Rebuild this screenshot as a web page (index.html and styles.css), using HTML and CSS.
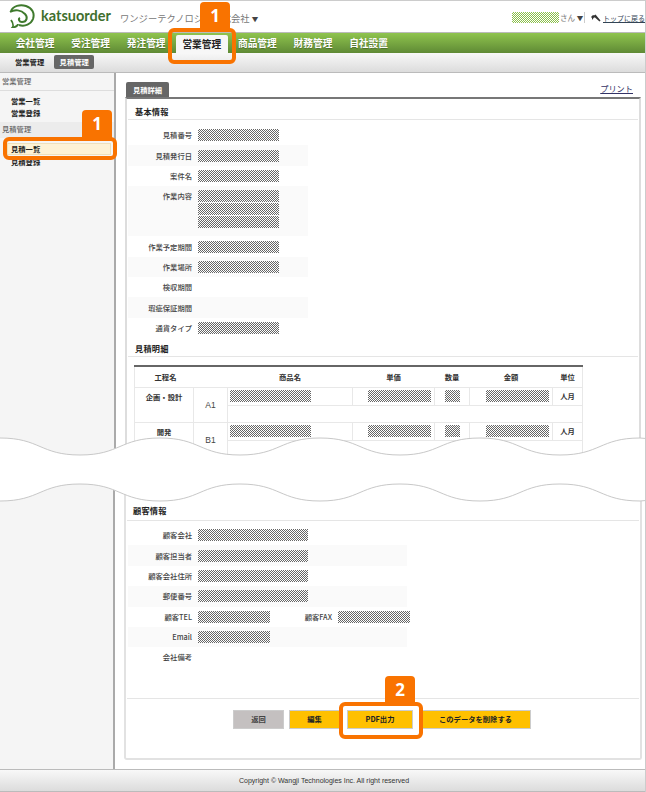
FILE: index.html
```html
<!DOCTYPE html>
<html lang="ja">
<head>
<meta charset="utf-8">
<title>katsuorder</title>
<link rel="stylesheet" href="styles.css">
</head>
<body>
<div class="page">
  <header class="header">
    <svg class="logo" viewBox="0 0 26 24" width="26" height="24" aria-hidden="true">
      <path d="M2 7C4 2 11 0 17 2C23 4 26 9 24 15C22 20 16 23 10 21" fill="none" stroke="#3f7a2d" stroke-width="2"/>
      <path d="M1 8C6 5 12 6 16 10C19 13 18 18 13 18C10 18 9 15 11 14" fill="none" stroke="#3f7a2d" stroke-width="2"/>
      <path d="M2 16C5 20 4 23 3 24C7 23 9 21 9 20" fill="none" stroke="#3f7a2d" stroke-width="1.8"/>
    </svg>
    <span class="brand">katsuorder</span>
    <span class="company">ワンジーテクノロジー株式会社 <span class="caret">▼</span></span>
    <div class="user">
      <span class="mask mask-green"></span>
      <span class="user-name">さん <span class="caret">▼</span></span>
      <span class="user-sep"></span>
      <svg class="home" viewBox="0 0 10 8" width="10" height="8" aria-hidden="true"><path d="M0 3L1 4L1 6L3 3.500L4 3.500L8.500 7.500L9.500 6.500L4.500 0.500L3 1.500L2 1L0 3Z" fill="#333"/></svg>
      <a class="top-link" href="#">トップに戻る</a>
    </div>
  </header>

  <nav class="nav">
    <a class="nav-item" href="#">会社管理</a>
    <a class="nav-item" href="#">受注管理</a>
    <a class="nav-item" href="#">発注管理</a>
    <a class="nav-item nav-active" href="#">営業管理</a>
    <a class="nav-item" href="#">商品管理</a>
    <a class="nav-item" href="#">財務管理</a>
    <a class="nav-item" href="#">自社設置</a>
  </nav>

  <div class="subnav">
    <a class="sub-item" href="#">営業管理</a>
    <a class="sub-item sub-active" href="#">見積管理</a>
  </div>

  <div class="part part-top">
    <aside class="side">
      <div class="side-head">営業管理</div>
      <ul class="side-list">
        <li class="side-link">営業一覧</li>
        <li class="side-link">営業登録</li>
      </ul>
      <div class="side-head side-head-alt">見積管理</div>
      <ul class="side-list side-list-tight">
        <li class="side-link side-current">見積一覧</li>
        <li class="side-link">見積登録</li>
      </ul>
    </aside>
    <main class="content">
      <div class="tabbar">
        <span class="tab">見積詳細</span>
        <a class="print" href="#">プリント</a>
      </div>
      <section class="panel">
        <h2 class="sec-title">基本情報</h2>
        <div class="rows">
          <div class="row"><span class="lbl">見積番号</span><span class="mask mask-m"></span></div>
          <div class="row row-alt"><span class="lbl">見積発行日</span><span class="mask mask-m"></span></div>
          <div class="row"><span class="lbl">案件名</span><span class="mask mask-m"></span></div>
          <div class="row row-alt row-multi"><span class="lbl">作業内容</span><span class="stack"><span class="mask mask-m"></span><span class="mask mask-m"></span><span class="mask mask-m"></span></span></div>
          <div class="row"><span class="lbl">作業予定期間</span><span class="mask mask-m"></span></div>
          <div class="row row-alt"><span class="lbl">作業場所</span><span class="mask mask-m"></span></div>
          <div class="row"><span class="lbl">検収期間</span></div>
          <div class="row row-alt"><span class="lbl">瑕疵保証期間</span></div>
          <div class="row"><span class="lbl">通貨タイプ</span><span class="mask mask-m"></span></div>
        </div>
        <h2 class="sec-title sec-title-next">見積明細</h2>
        <table class="items">
          <colgroup>
            <col class="c-proc"><col class="c-code"><col class="c-name"><col class="c-price"><col class="c-qty"><col class="c-amount"><col class="c-unit">
          </colgroup>
          <thead>
            <tr><th colspan="2" class="th-proc">工程名</th><th>商品名</th><th>単価</th><th>数量</th><th>金額</th><th>単位</th></tr>
          </thead>
          <tbody>
            <tr class="tr-a">
              <td rowspan="2" class="td-proc">企画・設計</td><td rowspan="2" class="td-code">A1</td>
              <td class="td-name"><span class="mask mask-name"></span></td>
              <td class="td-num"><span class="mask mask-price"></span></td>
              <td class="td-qty"><span class="mask mask-qty"></span></td>
              <td class="td-num"><span class="mask mask-price"></span></td>
              <td class="td-unit">人月</td>
            </tr>
            <tr class="tr-b"><td colspan="5"></td></tr>
            <tr class="tr-a">
              <td rowspan="2" class="td-proc">開発</td><td rowspan="2" class="td-code">B1</td>
              <td class="td-name"><span class="mask mask-name"></span></td>
              <td class="td-num"><span class="mask mask-price"></span></td>
              <td class="td-qty"><span class="mask mask-qty"></span></td>
              <td class="td-num"><span class="mask mask-price"></span></td>
              <td class="td-unit">人月</td>
            </tr>
            <tr class="tr-b"><td colspan="5"></td></tr>
          </tbody>
        </table>
      </section>
    </main>
  </div>

  <div class="part part-bottom">
    <aside class="side"></aside>
    <main class="content">
      <section class="panel panel-end">
        <h2 class="sec-title">顧客情報</h2>
        <div class="rows rows-wide">
          <div class="row"><span class="lbl">顧客会社</span><span class="mask mask-l"></span></div>
          <div class="row row-alt"><span class="lbl">顧客担当者</span><span class="mask mask-l"></span></div>
          <div class="row"><span class="lbl">顧客会社住所</span><span class="mask mask-l"></span></div>
          <div class="row row-alt"><span class="lbl">郵便番号</span><span class="mask mask-l"></span></div>
          <div class="row"><span class="lbl">顧客TEL</span><span class="mask mask-s"></span><span class="lbl lbl-second">顧客FAX</span><span class="mask mask-s"></span></div>
          <div class="row row-alt"><span class="lbl">Email</span><span class="mask mask-s"></span></div>
          <div class="row"><span class="lbl">会社備考</span></div>
        </div>
        <div class="actions">
          <a class="btn btn-gray" href="#">返回</a>
          <a class="btn btn-edit" href="#">編集</a>
          <a class="btn btn-pdf" href="#">PDF出力</a>
          <a class="btn btn-del" href="#">このデータを削除する</a>
        </div>
      </section>
    </main>
  </div>

  <footer class="footer">Copyright © Wangji Technologies Inc. All right reserved</footer>

  <svg class="tear" viewBox="0 0 646 70" width="646" height="70" aria-hidden="true">
    <path class="tear-fill" d="M0 2C40 2 40 19 80 19S120 2 160 2S200 19 240 19S280 2 320 2S360 19 400 19S440 2 480 2S520 19 560 19S600 2 640 2L646 2.500L646 64.500L640 65C600 65 600 48 560 48S520 65 480 65S440 48 400 48S360 65 320 65S280 48 240 48S200 65 160 65S120 48 80 48S40 65 0 65Z"/>
    <path class="tear-line" d="M0 2C40 2 40 19 80 19S120 2 160 2S200 19 240 19S280 2 320 2S360 19 400 19S440 2 480 2S520 19 560 19S600 2 640 2L646 2.500"/>
    <path class="tear-line" d="M0 65C40 65 40 48 80 48S120 65 160 65S200 48 240 48S280 65 320 65S360 48 400 48S440 65 480 65S520 48 560 48S600 65 640 65L646 64.500"/>
  </svg>

  <div class="callout callout-nav"><span class="callout-num callout-num-nav">1</span></div>
  <div class="callout callout-side"><span class="callout-num callout-num-side">1</span></div>
  <div class="callout callout-pdf"><span class="callout-num callout-num-pdf">2</span></div>
</div>
</body>
</html>
```
FILE: styles.css
```css
* { box-sizing: border-box; }
html, body { margin: 0; padding: 0; }
body { font-family: "Noto Sans CJK JP", "Liberation Sans", sans-serif; background: #fff; color: #222; }
a { color: inherit; text-decoration: none; }
ul { list-style: none; margin: 0; padding: 0; }
h2 { margin: 0; }

.page { position: relative; width: 646px; height: 792px; display: flex; flex-direction: column; overflow: hidden; border-top: 1px solid #ccc; border-right: 1px solid #ccc; }

.header { height: 31px; display: flex; align-items: center; padding-left: 9px; background: #fff; }
.logo { flex: none; margin-right: 6px; margin-top: -1px; }
.brand { flex: none; font-family: "Lato", sans-serif; font-weight: 700; font-size: 14.5px; letter-spacing: 0; color: #3f6f2e; width: 79px; margin-top: -2px; }
.company { font-size: 9.3px; color: #777; margin-top: 3px; }
.caret { font-size: 6.500px; color: #444; }
.user { margin-left: auto; display: flex; align-items: center; margin-top: 2px; }
.user-name { width: 20px; font-size: 7.5px; color: #777; margin-left: 1px; white-space: nowrap; }
.user-sep { width: 1px; height: 11px; background: #ccc; margin: 0 6px 0 4px; }
.home { margin-right: 2px; }
.top-link { font-size: 7px; color: #345; text-decoration: underline; white-space: nowrap; width: 42px; overflow: hidden; }

.mask { display: block; flex: none; height: 12px; background: repeating-conic-gradient(#666 0 25%, #fff 0 50%) 0 0 / 2px 2px; }
.mask-green { width: 47px; height: 11px; background: repeating-conic-gradient(#8cc04b 0 25%, #fff 0 50%) 0 0 / 2px 2px; }
.mask-m { width: 81px; }
.mask-l { width: 110px; }
.mask-s { width: 72px; }
.mask-name { width: 81px; }
.mask-price { width: 63px; margin-left: auto; }
.mask-qty { width: 15px; margin: 0 auto; }

.nav { height: 21px; display: flex; gap: 3.6px; padding: 1px 0 0 9px; border-top: 1px solid #bbb; background: linear-gradient(#8fc44e, #5f8a35); }
.nav-item { width: 52px; text-align: center; font-size: 9.7px; font-weight: 700; line-height: 19px; color: #fff; text-shadow: 0 1px 1px rgba(0, 0, 0, 0.3); }
.nav-active { background: #f7f7f7; color: #222; text-shadow: none; border-radius: 2px 2px 0 0; margin-top: 1px; line-height: 18px; }

.subnav { height: 20px; display: flex; align-items: center; padding: 0 0 1px 15px; gap: 10px; background: linear-gradient(#f8f8f8, #dcdcdc); border-bottom: 1px solid #bbb; }
.sub-item { font-size: 7.3px; font-weight: 700; color: #222; line-height: 14px; }
.sub-active { width: 40px; background: #666; color: #fff; text-align: center; border-radius: 2px; }

.part { display: grid; }
.part-top { height: 387px; overflow: hidden; grid-template-columns: 116px 1fr; }
.part-bottom { height: 309px; grid-template-columns: 115px 1fr; }
.side { background: #f5f5f5; border-right: 2px solid #aaa; }
.side-head { height: 18px; padding: 3px 0 0 2px; border-bottom: 1px solid #ddd; font-size: 7.3px; line-height: 10px; font-weight: 500; color: #666; }
.side-head-alt { height: 16px; padding-top: 2px; background: #ececec; border-bottom: none; }
.side-list { padding: 4px 3px 3px 7px; }
.side-list-tight { padding: 5px 3px 0 7px; }
.side-link { height: 12px; padding-left: 4px; font-size: 7.3px; line-height: 12px; font-weight: 700; color: #222; }
.side-current { margin-bottom: 1px; background: #fdf2d5; border: 1px solid #eee0bb; padding-left: 3px; line-height: 10px; }

.content { padding: 9px 4px 0 9px; background: #fff; }
.part-bottom .content { padding: 0 4px 9px 9px; }
.tabbar { height: 15px; display: flex; justify-content: space-between; padding-right: 8px; }
.tab { width: 43px; margin-left: 1px; background: #666; color: #fff; text-align: center; font-size: 7.3px; font-weight: 700; line-height: 16px; border-radius: 2px 2px 0 0; }
.print { font-size: 8.2px; color: #336; text-decoration: underline; line-height: 13px; }
.panel { border-top: 2px solid #777; border-left: 2px solid #ddd; border-right: 2px solid #ddd; height: 380px; padding: 0 1px; }
.panel-end { height: 300px; border: 2px solid #e2e2e2; border-top: none; border-radius: 0 0 3px 3px; padding-top: 40px; }

.sec-title { height: 21px; padding-left: 7px; border-bottom: 1px solid #e5e5e5; font-size: 8.2px; line-height: 24px; font-weight: 700; letter-spacing: 0.2px; color: #222; }
.panel-end .sec-title { padding-left: 6px; line-height: 20px; }
.sec-title-next { margin-top: 0; height: 19px; line-height: 20px; }

.rows { margin-top: 5px; width: 180px; }
.rows-wide { margin: 4px 0 0 1px; width: 279px; }
.row { min-height: 20.35px; padding: 4.2px 0; display: flex; align-items: flex-start; }
.row-alt { background: #fafafa; }
.row-multi { padding-bottom: 8px; }
.lbl { flex: none; width: 64px; margin-right: 6px; text-align: right; font-size: 7.3px; line-height: 12px; color: #444; font-weight: 500; }
.lbl-second { width: 62px; }
.stack { display: flex; flex-direction: column; gap: 1px; }

.items { margin: 8px 0 0 6px; width: 448px; table-layout: fixed; border-collapse: collapse; border-top: 2px solid #666; font-size: 7.3px; }
.c-proc { width: 59px; }
.c-code { width: 34px; }
.c-name { width: 125px; }
.c-price { width: 82px; }
.c-qty { width: 35px; }
.c-amount { width: 83px; }
.c-unit { width: 30px; }
.items th, .items td { border: 1px solid #e8e8e8; padding: 0 3px; font-weight: 700; color: #333; text-align: center; vertical-align: middle; }
.items th { border-left-color: transparent; border-right-color: transparent; }
.items th:first-child { border-left-color: #e8e8e8; }
.items th:last-child { border-right-color: #e8e8e8; }
.items .th-proc { padding-right: 34px; }
.items thead tr { height: 21px; }
.tr-a { height: 18px; }
.tr-b { height: 17px; }
.items .td-name { padding-left: 2px; }
.items .td-proc { vertical-align: top; line-height: 18px; }
.items .td-code { font-family: "Liberation Sans", sans-serif; font-size: 8.5px; font-weight: 400; color: #444; }

.actions { width: 512px; margin-top: 30px; border-top: 1px solid #e5e5e5; padding: 11px 0 0 106px; display: flex; gap: 5px; }
.btn { height: 19px; display: block; border: 1px solid #ccc; text-align: center; font-size: 7.3px; font-weight: 700; line-height: 17px; color: #222; background: #ffc000; }
.btn-gray { width: 51px; background: #c4c0c0; color: #444; }
.btn-edit { width: 51px; }
.btn-pdf { width: 66px; margin-left: 2px; margin-right: 2px; }
.btn-del { width: 111px; }

.footer { flex: 1; display: flex; align-items: center; padding: 0 0 1px 239px; font-family: "Liberation Sans", sans-serif; font-size: 7px; color: #333; border-top: 1px solid #bbb; border-bottom: 1px solid #bbb; background: linear-gradient(#f8f8f8, #dcdcdc); }

.tear { position: absolute; left: 0; top: 435px; }
.tear-fill { fill: #fff; }
.tear-line { fill: none; stroke: #c8c8c8; stroke-width: 1; }

.callout { position: absolute; border: 4px solid #f97300; border-radius: 6px; }
.callout-nav { left: 168px; top: 27px; width: 68px; height: 36px; }
.callout-side { left: 3px; top: 136px; width: 114px; height: 23px; }
.callout-pdf { left: 339px; top: 701px; width: 84px; height: 37px; }
.callout-num { position: absolute; width: 30px; height: 28px; background: #f97300; border-radius: 4px 4px 0 0; color: #fff; text-align: center; font-family: "Open Sans", sans-serif; font-weight: 700; font-size: 17px; line-height: 28px; }
.callout-num-nav { left: 28px; top: -30px; }
.callout-num-side { left: 75px; top: -31px; }
.callout-num-pdf { left: 42px; top: -30px; }
```
